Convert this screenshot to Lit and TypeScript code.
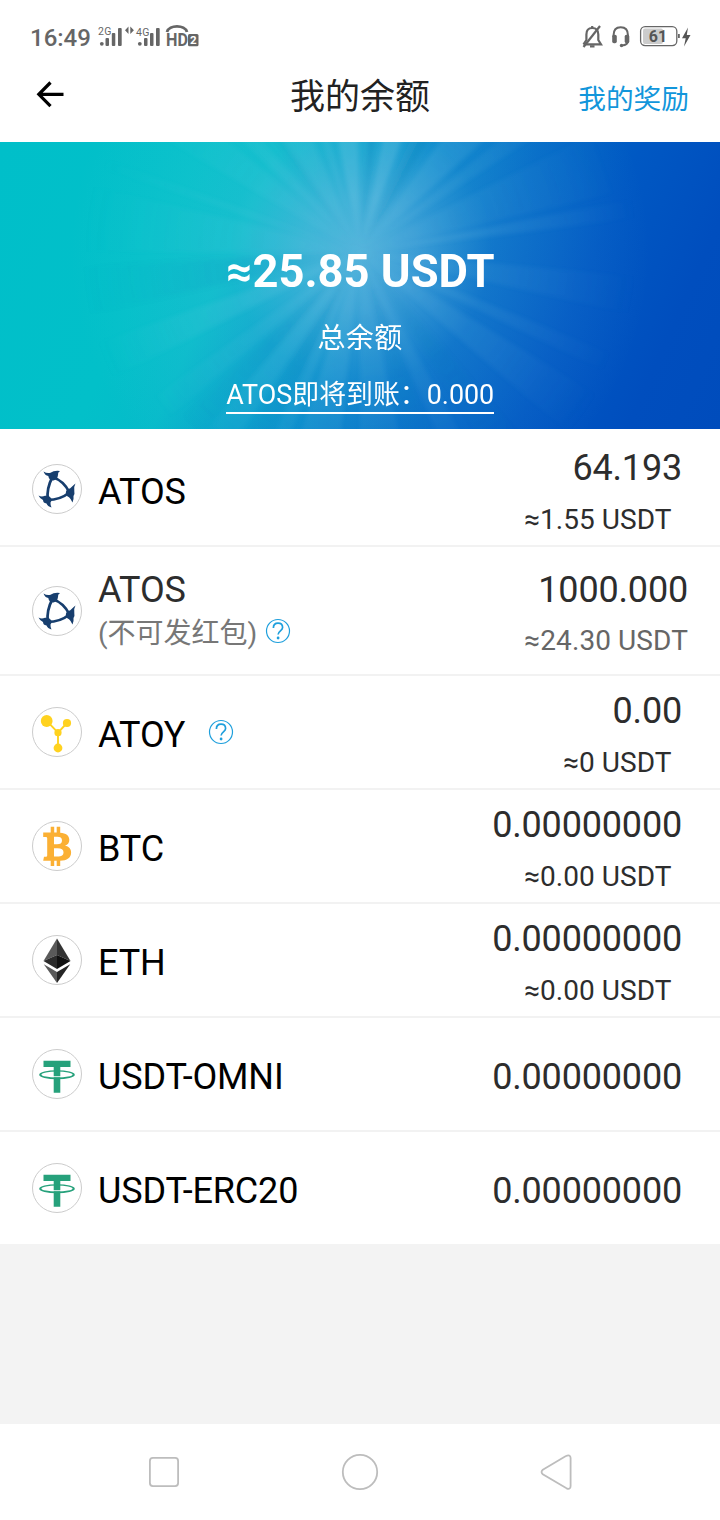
import { LitElement, html, svg, css, nothing } from "lit";
import { customElement, property } from "lit/decorators.js";

type Coin = "atos" | "atoy" | "btc" | "eth" | "usdt";

interface Asset {
  coin: Coin;
  name: string;
  note?: string;
  help?: boolean;
  amount: string;
  approx?: string;
  bonus?: boolean;
}

const ASSETS: Asset[] = [
  { coin: "atos", name: "ATOS", amount: "64.193", approx: "≈1.55 USDT" },
  { coin: "atos", name: "ATOS", note: "(不可发红包)", amount: "1000.000", approx: "≈24.30 USDT", bonus: true },
  { coin: "atoy", name: "ATOY", help: true, amount: "0.00", approx: "≈0 USDT" },
  { coin: "btc", name: "BTC", amount: "0.00000000", approx: "≈0.00 USDT" },
  { coin: "eth", name: "ETH", amount: "0.00000000", approx: "≈0.00 USDT" },
  { coin: "usdt", name: "USDT-OMNI", amount: "0.00000000" },
  { coin: "usdt", name: "USDT-ERC20", amount: "0.00000000" },
];

const COIN_ART = {
  atos: svg`
    <g fill="none" stroke="#173e6e" stroke-width="2.7" stroke-linecap="round">
      <path d="M20.500 13Q14.500 24 15.700 36Q28 36 37.500 28.500Q32 17 20.500 13"/>
    </g>
    <g fill="#173e6e">
      <path d="M11.500 7.500Q15 9.800 18.500 8.800Q22 6.200 28 7Q25.500 8.500 26 11Q25.500 15.500 21.500 16.500Q17 16.500 16.300 12Q13 11.500 11.500 7.500z"/>
      <path d="M43.500 19.500Q41.500 23 42.300 27Q43 30 41.500 32Q42 35 40.500 38.500Q39 35 37 33.300Q33 31.500 34 27.500Q35 24.500 38 24.500Q40.500 22 43.500 19.500z"/>
      <path d="M6.500 31.500Q9.500 33.300 13 31.800Q17 31 19 34Q20.500 36 18.500 38.500Q18.300 41 19.500 43.500Q15.500 42.300 14.500 39.500Q11 39 11 36Q8 35 6.500 31.500z"/>
    </g>`,
  atoy: svg`
    <path fill="none" stroke="#ffd21f" stroke-width="1.9" d="M14.700 13.800L26 25.700L35 16M26 25.700V41"/>
    <g fill="#ffd21f">
      <circle cx="14.700" cy="14" r="5.900"/><circle cx="35" cy="16" r="4.100"/>
      <circle cx="26" cy="25.700" r="3.600"/><circle cx="26" cy="41" r="4.400"/>
    </g>`,
  btc: svg`
    <path fill="#fbb034" fill-rule="evenodd" d="M11.200 11.500H18.700V5.800H22.200V11.500H24.700V5.800H28.200V11.700C34 12.200 37.300 14.500 37.300 18.700C37.300 21.800 36 23.600 33 24.500C37 25.400 39.100 27.800 39.100 31.500C39.100 37 35 39.500 28.200 39.800V45H24.700V39.800H22.200V45H18.700V39.800H11.200L12 35.800H14Q15.200 35.800 15.200 34.500V17.200Q15.200 15.900 13.900 15.900H11.200zM22 15.800V23.200H25C28.300 23.200 30 22 30 19.400C30 16.800 28.300 15.800 25.200 15.800zM22 27.200V35.500H25.500C29.500 35.500 31.500 34.200 31.500 31.200C31.500 28.400 29.500 27.200 25.500 27.200z"/>`,
  eth: svg`
    <path fill="#5a5a5a" d="M25 3.500V20L11.500 26z"/><path fill="#333" d="M25 3.500V20L38.500 26z"/>
    <path fill="#2c2c2c" d="M11.500 26L25 20V34z"/><path fill="#111" d="M38.500 26L25 20V34z"/>
    <path fill="#5a5a5a" d="M11.800 29.200L25 37V48z"/><path fill="#252525" d="M38.200 29.200L25 37V48z"/>`,
  usdt: svg`
    <path fill="#26a17b" d="M11.500 11.700H38.500V18H28.300V27.200H21.700V18H11.500zM21.700 28.200H28.300V43.700H21.700z"/>
    <path fill="#26a17b" fill-rule="evenodd" d="M7.200 25.800a17.800 4.500 0 1 0 35.600 0a17.800 4.500 0 1 0 -35.600 0M9.400 25.500a15.600 3 0 1 0 31.200 0a15.600 3 0 1 0 -31.200 0"/>`,
};

// Sunburst rays: direction in degrees, half-spread in degrees, opacity, length.
const LIGHT_RAYS: number[][] = [
  [-96, 5, 0.2, 190], [-74, 4.5, 0.22, 190], [-64, 1.2, 0.1, 170], [-48, 6, 0.13, 220],
  [-36, 2.5, 0.09, 240], [-145, 5, 0.06, 250], [-134, 2.5, 0.08, 230], [-119, 6, 0.1, 200],
  [-107, 1.5, 0.1, 190], [-161, 1.2, 0.06, 270], [-9, 2, 0.12, 290], [-20, 7, 0.07, 260],
  [9, 4, 0.08, 300], [24, 2, 0.09, 270], [36, 5, 0.09, 290], [64, 3, 0.08, 230],
  [84, 6, 0.09, 210], [102, 6, 0.12, 220], [113, 2, 0.1, 220], [127, 3.5, 0.11, 230],
  [142, 3, 0.08, 250], [157, 4, 0.12, 280], [187, 7, 0.06, 290],
];
const DARK_RAYS: number[][] = [
  [-84, 1.6, 0.25, 200], [-62, 3.5, 0.25, 200], [-125, 2, 0.08, 220], [172, 5, 0.12, 290],
  [72, 3.5, 0.1, 240], [53, 4, 0.12, 260], [119, 3, 0.14, 240], [134, 3, 0.1, 240],
];

function ray([dir, spread, opacity, length]: number[], fill: string) {
  const at = (deg: number) => {
    const r = (deg * Math.PI) / 180;
    return `${(360 + Math.cos(r) * length).toFixed(1)} ${(110 + Math.sin(r) * length).toFixed(1)}`;
  };
  return svg`<path d=${`M360 110L${at(dir - spread)}L${at(dir + spread)}z`} fill=${fill} opacity=${opacity}/>`;
}

@customElement("help-mark")
export class HelpMark extends LitElement {
  static styles = css`
    :host { display: block; width: 26px; height: 26px; }
    svg { display: block; }
  `;
  render() {
    return html`<svg width="26" height="26" viewBox="0 0 26 26" fill="none" stroke="#1e9fdc">
      <circle cx="13" cy="13" r="11.500" stroke-width="1.200"/>
      <path d="M8.400 9.900C8.400 7 10.200 5.200 13 5.200S17.600 6.900 17.600 9.500C17.600 12.700 13.100 13 13.100 16.600" stroke-width="1.700"/>
      <circle cx="13.100" cy="20" r="1.400" fill="#1e9fdc" stroke="none"/>
    </svg>`;
  }
}

@customElement("asset-row")
export class AssetRow extends LitElement {
  @property({ attribute: false }) asset!: Asset;

  static styles = css`
    :host { display: block; }
    .row {
      display: flex; align-items: stretch; height: 112px;
      padding-left: 32px; background: #fff;
    }
    .row.bonus { height: 127px; }
    .coin {
      align-self: center; flex: none; width: 48px; height: 48px;
      border: 1px solid #ccc; border-radius: 50%;
      display: flex; align-items: center; justify-content: center;
    }
    .coin svg { flex: none; }
    .label { flex: 1; display: flex; align-items: center; padding: 5px 0 0 16px; }
    .name { font-size: 36px; line-height: 42px; color: #000; white-space: nowrap; letter-spacing: -0.15px; }
    .label help-mark { margin: -5px 0 0 23px; }
    .bonus .label { flex-direction: column; align-items: flex-start; padding-top: 22px; }
    .bonus .name { color: #2d2d2d; }
    .noteline { display: flex; align-items: center; height: 42px; gap: 8px; margin-top: -1px; }
    .note { font-size: 28px; color: #777; }
    .bonus .noteline help-mark { margin: 0; }
    .figures {
      display: flex; flex-direction: column; align-items: flex-end;
      padding: 9px 38px 0 0; color: #2d2d2d;
    }
    .amount { font-size: 36px; line-height: 52px; letter-spacing: -0.18px; }
    .approx { font-size: 28px; line-height: 51px; margin-right: 10.500px; letter-spacing: 0.05px; }
    .figures.single { justify-content: center; padding-top: 5px; }
    .bonus .figures { padding: 17px 32px 0 0; }
    .bonus .approx { margin-right: 0; line-height: 49px; color: #666; letter-spacing: 0.1px; }
  `;

  render() {
    const a = this.asset;
    return html`
      <div class="row ${a.bonus ? "bonus" : ""}">
        <div class="coin"><svg width="50" height="50" viewBox="0 0 50 50">${COIN_ART[a.coin]}</svg></div>
        <div class="label">
          <span class="name">${a.name}</span>
          ${a.help ? html`<help-mark></help-mark>` : nothing}
          ${a.note ? html`<div class="noteline"><span class="note">${a.note}</span><help-mark></help-mark></div>` : nothing}
        </div>
        <div class="figures ${a.approx ? "" : "single"}">
          <span class="amount">${a.amount}</span>
          ${a.approx ? html`<span class="approx">${a.approx}</span>` : nothing}
        </div>
      </div>`;
  }
}

@customElement("app-root")
export class AppRoot extends LitElement {
  static styles = css`
    :host {
      display: flex; flex-direction: column; width: 720px; height: 1520px; overflow: hidden;
      background: #f3f3f3; font-family: Roboto, "Noto Sans CJK SC", sans-serif;
    }
    .status {
      height: 72px; background: #fff; flex: none; display: flex; align-items: flex-start;
      justify-content: space-between; color: #666; padding: 0 28px 0 30px;
    }
    .clock { font-size: 24px; font-weight: 500; line-height: 29px; margin-top: 24px; width: 68px; }
    .left, .right { display: flex; align-items: flex-start; }
    .left svg, .right svg { display: block; margin-top: 20px; }
    .tiny { font: 400 10.500px Roboto, sans-serif; }
    .hd { font: 700 17.5px Roboto, sans-serif; }
    .two { font: 700 11.500px Roboto, sans-serif; }
    .level { font: 700 16px Roboto, sans-serif; }
    .bar {
      height: 70px; background: #fff; flex: none; display: grid;
      grid-template-columns: 200px 1fr 200px; align-items: start;
    }
    .back { margin: 8.500px 0 0 35px; }
    .title { font-size: 35px; line-height: 48px; color: #222; text-align: center; padding-top: 2px; }
    .link { font-size: 27.7px; line-height: 48px; color: #1296db; text-align: right; padding: 4px 31px 0 0; }
    .hero {
      height: 287px; flex: none; display: grid; color: #fff;
      background: linear-gradient(114deg, #00bfc9 0%, #02c0c9 24%, #06bbca 33%, #059ecb 43%, #0380ca 53%, #0068c6 64%, #0058c3 76%, #004ebe 89%, #004cbc 100%);
    }
    .hero > * { grid-area: 1 / 1; }
    .copy { display: flex; flex-direction: column; align-items: center; padding-top: 101px; z-index: 1; }
    .total { font-size: 45.300px; font-weight: 700; line-height: 57px; padding-left: 1px; }
    .caption { font-size: 28px; line-height: 40px; margin-top: 19px; letter-spacing: 0.3px; }
    .pending { font-size: 26.900px; line-height: 34px; margin-top: 19px; padding-left: 0.5px; border-bottom: 2px solid #fff; white-space: nowrap; }
    .list { flex: none; background: #f2f2f2; display: flex; flex-direction: column; gap: 2px; }
    .list::before { content: ""; height: 4px; background: #fff; margin-bottom: -2px; }
    .nav {
      margin-top: auto; height: 96px; flex: none; background: #fff;
      display: grid; grid-template-columns: 196px 196px 196px; justify-content: center;
      place-items: center;
    }
    svg { display: block; }
  `;

  private status() {
    return html`<div class="status">
      <div class="left">
        <span class="clock">16:49</span>
        <svg width="104" height="32" viewBox="98 20 104 32" fill="#666">
          <text class="tiny" x="98" y="34.500" textLength="13.500">2G</text>
          <circle cx="101.800" cy="43.800" r="1.900"/>
          <rect x="105.500" y="38" width="3.500" height="8" rx="1"/>
          <rect x="111.800" y="33" width="3.500" height="13" rx="1"/>
          <rect x="118" y="28" width="3.700" height="18" rx="1"/>
          <path d="M128.500 26.500V34L125 30.300zM130.300 26.500V34L133.900 30.300z"/>
          <text class="tiny" x="136" y="35.500" textLength="13.500">4G</text>
          <circle cx="139.800" cy="43.800" r="1.900"/>
          <rect x="144" y="38" width="3.500" height="8" rx="1"/>
          <rect x="150" y="33" width="3.500" height="13" rx="1"/>
          <rect x="156" y="28" width="3.700" height="18" rx="1"/>
          <path d="M167 32C169 24.500 185 24.500 187 32" fill="none" stroke="#666" stroke-width="2.800"/>
          <text class="hd" x="166" y="46.300" textLength="22" lengthAdjust="spacingAndGlyphs">HD</text>
          <rect x="188" y="34" width="10.500" height="12.300" rx="1.500"/>
          <text class="two" x="190" y="44.300" fill="#fff">2</text>
        </svg>
      </div>
      <div class="right">
        <svg width="112" height="32" viewBox="580 20 112 32" fill="none" stroke="#666">
          <path d="M583.500 44.300H601L598.300 40V34.500C598.300 30.500 596 28 592.200 28S586.400 30.500 586.400 34.500V40L583.500 44.300" stroke-width="2.200"/>
          <path d="M592.200 26V28M590 46.300H594.500" stroke-width="2.200"/>
          <path d="M600 26L583.500 47" stroke-width="2.200"/>
          <path d="M613.500 37V35.500C613.500 30 616.500 27.300 620.700 27.300S628 30 628 35.500V40C628 43.500 626 45.400 622 45.400" stroke-width="2"/>
          <rect x="612.200" y="34.800" width="4.600" height="8.500" rx="1.800" fill="#666" stroke="none"/>
          <rect x="624.700" y="34.800" width="4.600" height="8.500" rx="1.800" fill="#666" stroke="none"/>
          <circle cx="621.500" cy="45.500" r="1.700" fill="#666" stroke="none"/>
          <rect x="643" y="28.500" width="20" height="15.500" rx="2" fill="#ccc" stroke="none"/>
          <rect x="640.600" y="26.600" width="36.200" height="19" rx="4.500" stroke-width="1.300"/>
          <rect x="678" y="34" width="1.800" height="4" fill="#666" stroke="none"/>
          <text class="level" x="648.800" y="42" fill="#555" stroke="none">61</text>
          <path d="M688 27.500L682 38.300H685.700L684 46.500L690.500 35H686.800z" fill="#555" stroke="none"/>
        </svg>
      </div>
    </div>`;
  }

  render() {
    return html`
      ${this.status()}
      <div class="bar">
        <svg class="back" width="30" height="28" viewBox="0 0 30 28" fill="none" stroke="#000" stroke-width="3.200">
          <path d="M28.500 13.300H4M15.500 1.500L3.800 13.300L15.500 25.200"/>
        </svg>
        <div class="title">我的余额</div>
        <div class="link">我的奖励</div>
      </div>
      <div class="hero">
        <svg width="720" height="287" viewBox="0 0 720 287">
          <defs>
            <radialGradient id="lit" gradientUnits="userSpaceOnUse" cx="360" cy="110" r="280">
              <stop offset="0" stop-color="#bfe6f5" stop-opacity="0"/>
              <stop offset="0.2" stop-color="#bfe6f5" stop-opacity="0.7"/>
              <stop offset="0.45" stop-color="#9adcf0" stop-opacity="0.9"/>
              <stop offset="1" stop-color="#9adcf0" stop-opacity="0"/>
            </radialGradient>
            <radialGradient id="dim" gradientUnits="userSpaceOnUse" cx="360" cy="110" r="280">
              <stop offset="0" stop-color="#0080b8" stop-opacity="0"/>
              <stop offset="0.4" stop-color="#007cb8" stop-opacity="1"/>
              <stop offset="1" stop-color="#007cb8" stop-opacity="0"/>
            </radialGradient>
            <radialGradient id="glow" gradientUnits="userSpaceOnUse" cx="360" cy="110" r="290">
              <stop offset="0" stop-color="#a0d8ec" stop-opacity="0.52"/>
              <stop offset="0.2" stop-color="#a0d8ec" stop-opacity="0.35"/>
              <stop offset="0.45" stop-color="#80d0e8" stop-opacity="0.14"/>
              <stop offset="1" stop-color="#80d0e8" stop-opacity="0"/>
            </radialGradient>
            <filter id="soft" x="-5%" y="-5%" width="110%" height="110%"><feGaussianBlur stdDeviation="2.200"/></filter>
          </defs>
          <rect width="720" height="287" fill="url(#glow)"/>
          <g filter="url(#soft)">
            ${DARK_RAYS.map((r) => ray(r, "url(#dim)"))}
            ${LIGHT_RAYS.map((r) => ray(r, "url(#lit)"))}
          </g>
        </svg>
        <div class="copy">
          <div class="total">≈25.85 USDT</div>
          <div class="caption">总余额</div>
          <div class="pending">ATOS即将到账：0.000</div>
        </div>
      </div>
      <div class="list">${ASSETS.map((a) => html`<asset-row .asset=${a}></asset-row>`)}</div>
      <div class="nav">
        <svg width="40" height="40" viewBox="0 0 40 40" fill="none" stroke="#bdbdbd" stroke-width="1.800">
          <rect x="5.900" y="5.900" width="28.200" height="28.200" rx="3"/>
        </svg>
        <svg width="40" height="40" viewBox="0 0 40 40" fill="none" stroke="#bdbdbd" stroke-width="1.800">
          <circle cx="20" cy="20" r="17.200"/>
        </svg>
        <svg width="40" height="40" viewBox="0 0 40 40" fill="none" stroke="#bdbdbd" stroke-width="1.800">
          <path d="M6.800 17.800L29.500 4.300Q34.600 2 34.600 6V34Q34.600 38 30.500 36.300L6.800 22.200Q4.300 20 6.800 17.800z"/>
        </svg>
      </div>`;
  }
}
